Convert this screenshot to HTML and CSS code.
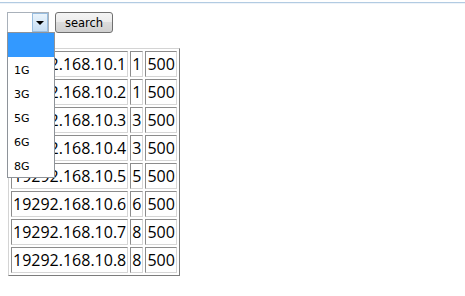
FILE: index.html
```html
<!DOCTYPE html>
<html>

<head>
    <title>search</title>
    <meta name="viewport" content="width=device-width, initial-scale=1">
    <link rel="stylesheet" href="styles.css">
</head>

<body>
    <div class="topline"></div>

    <div class="bar">
        <div class="picker">
            <div class="select"><span class="arrow"></span></div>
            <ul class="menu">
                <li class="active"></li>
                <li>1G</li>
                <li>3G</li>
                <li>5G</li>
                <li>6G</li>
                <li>8G</li>
            </ul>
        </div>
        <button class="btn">search</button>
    </div>

    <table class="grid">
        <tr><td>19292.168.10.1</td><td>1</td><td>500</td></tr>
        <tr><td>19292.168.10.2</td><td>1</td><td>500</td></tr>
        <tr><td>19292.168.10.3</td><td>3</td><td>500</td></tr>
        <tr><td>19292.168.10.4</td><td>3</td><td>500</td></tr>
        <tr><td>19292.168.10.5</td><td>5</td><td>500</td></tr>
        <tr><td>19292.168.10.6</td><td>6</td><td>500</td></tr>
        <tr><td>19292.168.10.7</td><td>8</td><td>500</td></tr>
        <tr><td>19292.168.10.8</td><td>8</td><td>500</td></tr>
    </table>
</body>

</html>
```

FILE: styles.css
```css
body {
    margin: 0;
    background: #fff;
}

.topline {
    margin-top: 2px;
    height: 1px;
    background: #b2cbe2;
    border-bottom: 1px solid #eef3f9;
}

.bar {
    display: flex;
    gap: 6px;
    padding: 8px 0 0 7px;
}

.picker {
    position: relative;
}

.select {
    width: 42px;
    height: 21px;
    box-sizing: border-box;
    border: 1px solid #a9b1ba;
    background: #fff;
    display: flex;
    justify-content: flex-end;
}

.arrow {
    width: 16px;
    box-sizing: border-box;
    border: 1px solid #98bde0;
    background: linear-gradient(#eaf4fc, #c6def4);
    display: flex;
    align-items: center;
    justify-content: center;
}

.arrow::after {
    content: "";
    border-left: 4px solid transparent;
    border-right: 4px solid transparent;
    border-top: 4px solid #000;
}

.menu {
    position: absolute;
    top: 20px;
    left: 0;
    width: 48px;
    margin: 0;
    padding: 0;
    list-style: none;
    box-sizing: border-box;
    border: 1px solid #8e9399;
    background: #fff;
    font: 11px "DejaVu Sans", sans-serif;
    color: #000;
}

.menu li {
    height: 22px;
    line-height: 24px;
    padding: 2px 0 0 6px;
}

.menu .active {
    background: #3399ff;
}

.btn {
    width: 58px;
    height: 21px;
    padding: 0;
    border: 1px solid #707070;
    border-radius: 3px;
    background: linear-gradient(#f4f4f4 0%, #ebebeb 50%, #dcdcdc 50%, #d0d0d0 100%);
    font: 11.5px "DejaVu Sans", sans-serif;
    color: #000;
}

.grid {
    margin: 15px 0 0 8px;
    border-spacing: 2px;
    border: 1px solid;
    border-color: #d4d4d4 #7c7c7c #7c7c7c #d4d4d4;
}

.grid td {
    padding: 1px;
    border: 1px solid;
    border-color: #8c8c8c #d6d6d6 #d6d6d6 #8c8c8c;
    font: 16px/22px "Open Sans", sans-serif;
    color: #000;
    white-space: nowrap;
}
```
